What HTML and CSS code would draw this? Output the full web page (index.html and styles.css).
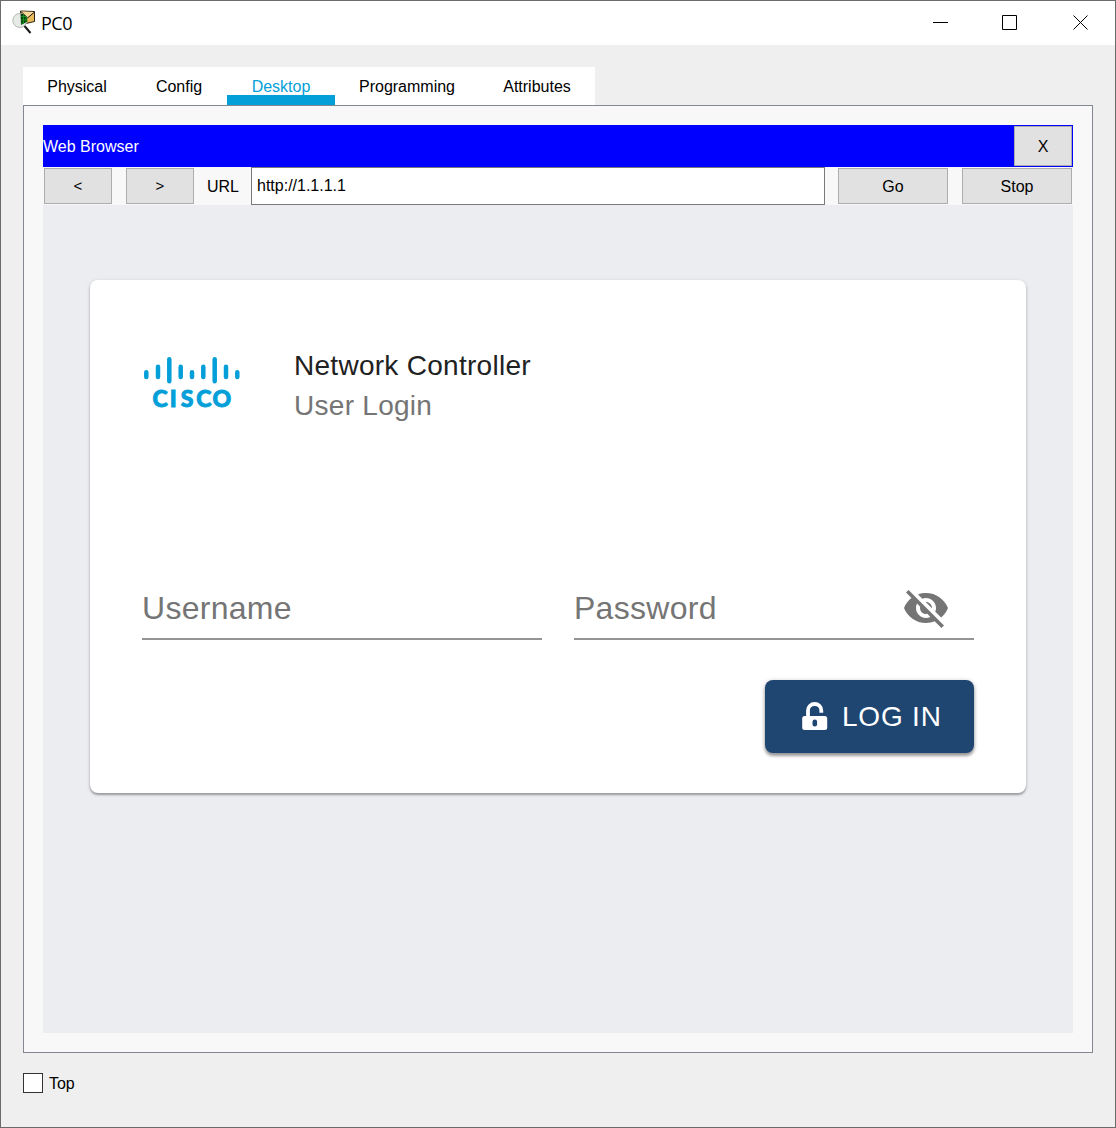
FILE: index.html
```html
<!DOCTYPE html>
<html lang="en">
<head>
<meta charset="utf-8">
<title>PC0</title>
<link rel="stylesheet" href="styles.css">
</head>
<body>
<div class="window">
  <header class="titlebar">
    <svg class="app-icon" width="24" height="25" viewBox="0 0 24 25">
      <path d="M8.500 1L22.500 1.500v10L9.500 14.500z" fill="#e9b95a" stroke="#2a2216" stroke-width="1"/>
      <path d="M9 1.500l6.500 6.500L22.500 2" fill="#f6d795" stroke="#15120c" stroke-width="1"/>
      <circle cx="7.800" cy="10.500" r="7" fill="#e6ebe6" stroke="#b5b5b5" stroke-width="1"/>
      <path d="M8.500 3.500q7 .5 7 8L9 15z" fill="#063d0a"/>
      <path d="M9 6.500h5M9 10h6M9 13h3M11.500 4.500v9M14 6v6" stroke="#18a324" stroke-width=".8"/>
      <path d="M12.500 16l6 7" stroke="#181818" stroke-width="2"/>
    </svg>
    <h1 class="window-title">PC0</h1>
    <div class="window-controls">
      <svg width="16" height="16" viewBox="0 0 16 16"><path d="M0 7.500h15"/></svg>
      <svg width="16" height="16" viewBox="0 0 16 16"><path d="M.5.500h14v14H.5z"/></svg>
      <svg width="16" height="16" viewBox="0 0 16 16"><path d="M.5.500l14 14m0-14l-14 14"/></svg>
    </div>
  </header>
  <main class="content">
    <nav class="tabs">
      <a class="tab tab-physical">Physical</a>
      <a class="tab tab-config">Config</a>
      <a class="tab tab-desktop active">Desktop</a>
      <a class="tab tab-programming">Programming</a>
      <a class="tab tab-attributes">Attributes</a>
    </nav>
    <section class="panel">
      <div class="app-bar"><span>Web Browser</span><button class="btn close">X</button></div>
      <div class="toolbar">
        <button class="btn nav">&lt;</button>
        <button class="btn nav">&gt;</button>
        <label class="url-label" for="url">URL</label>
        <input class="url" id="url" value="http://1.1.1.1">
        <button class="btn action">Go</button>
        <button class="btn action">Stop</button>
      </div>
      <div class="page">
        <form class="card">
          <div class="brand">
            <svg class="logo" width="100" height="62" viewBox="142 356 100 62">
              <path d="M146.300 372.200v4.800M158 366.800V377M169.300 359.200v22M180.700 366.800V377M192 372.200v4.800M203.300 366.800V377M214.700 359.200v22M226 366.800V377M237.300 372.200v4.800"/>
              <text x="152.500 169.700 180.800 196.300 212.600" y="406.600">CISCO</text>
            </svg>
            <div class="heading">
              <h2>Network Controller</h2>
              <p>User Login</p>
            </div>
          </div>
          <div class="fields">
            <div class="field"><span>Username</span></div>
            <div class="field">
              <span>Password</span>
              <svg class="eye" width="48" height="48" viewBox="0 0 24 24"><path d="M12 7c2.760 0 5 2.240 5 5 0 .65-.13 1.260-.36 1.830l2.920 2.920c1.510-1.260 2.700-2.890 3.430-4.750-1.730-4.390-6-7.500-11-7.500-1.400 0-2.740.25-3.980.7l2.160 2.160C10.740 7.130 11.350 7 12 7zM2 4.270l2.280 2.280.46.46C3.080 8.300 1.780 10.020 1 12c1.730 4.390 6 7.500 11 7.500 1.550 0 3.030-.3 4.380-.84l.42.42L19.730 22 21 20.730 3.270 3 2 4.270zM7.530 9.800l1.550 1.550c-.05.21-.08.43-.08.65 0 1.660 1.340 3 3 3 .22 0 .44-.03.65-.08l1.550 1.550c-.67.33-1.410.53-2.200.53-2.760 0-5-2.240-5-5 0-.79.2-1.530.53-2.200zm4.310-.78l3.150 3.150.02-.16c0-1.660-1.340-3-3-3l-.17.01z"/></svg>
            </div>
          </div>
          <button class="login" type="button">
            <svg width="26" height="29" viewBox="0 0 26 29">
              <path d="M6 15V8.500C6 4.700 9 2 12.700 2s6.600 2.700 6.600 6.500v2.200" fill="none" stroke="#fff" stroke-width="3.800"/>
              <rect x=".2" y="14" width="25" height="14" rx="2.500" fill="#fff"/>
              <rect x="10.500" y="17.500" width="4.600" height="7" rx="2.300" fill="#1f4571"/>
            </svg>
            <span>LOG IN</span>
          </button>
        </form>
      </div>
    </section>
    <label class="top-option"><input type="checkbox"><span>Top</span></label>
  </main>
</div>
</body>
</html>
```

FILE: styles.css
```css
* { box-sizing: border-box; }
body { margin: 0; font: 16px/20px "Liberation Sans", Arial, sans-serif; color: #000; }
h1, h2, p { margin: 0; font-weight: 400; }
button, input { font: inherit; color: inherit; margin: 0; }

.window { height: 1128px; border: 1px solid #6b6b6b; background: #efefef; display: flex; flex-direction: column; }
.titlebar { height: 44px; background: #fff; display: flex; align-items: center; padding: 0 26px 0 11px; }
.app-icon { margin: -2px 5px 0 0; }
.window-title { font: 18px/24px "Open Sans", sans-serif; letter-spacing: -0.5px; }
.window-controls { margin-left: auto; display: flex; }
.window-controls svg { fill: none; stroke: #000; margin-left: 55px; }
.window-controls svg:nth-child(2) { margin-left: 53px; }

.content { flex: 1; padding: 22px 22px 0; display: flex; flex-direction: column; align-items: flex-start; }
.tabs { display: flex; background: #fff; height: 38px; }
.tab { display: flex; justify-content: center; align-items: center; padding-top: 1px; }
.tab-physical { width: 108px; }
.tab-config { width: 96px; }
.tab-desktop { width: 108px; }
.tab-programming { width: 144px; }
.tab-attributes { width: 116px; }
.tab.active { color: #049fd9; background: linear-gradient(#049fd9, #049fd9) bottom / 100% 10px no-repeat; }

.panel { width: 1070px; height: 948px; border: 1px solid #828790; background: #f8f8f8; padding: 19px; display: flex; flex-direction: column; }
.app-bar { height: 42px; background: #00f; color: #fff; display: flex; align-items: center; justify-content: space-between; padding: 1px 1px 1px 0; }
.app-bar span { padding-top: 2px; }
.btn { background: #e1e1e1; border: 1px solid #adadad; color: #000; padding: 2px 0 0; }
.close { width: 58px; height: 40px; }
.toolbar { height: 38px; display: flex; align-items: center; padding: 0 1px; }
.nav { width: 68px; height: 36px; margin-right: 14px; padding-top: 0; font-size: 15px; }
.url-label { width: 44px; margin-left: -1px; padding-top: 2px; }
.url { width: 574px; height: 38px; border: 1px solid #7a7a7a; background: #fff; padding: 0 5px; border-radius: 0; margin-right: 13px; }
.action { width: 110px; height: 36px; }
.action + .action { margin-left: 14px; }
.page { flex: 1; background: #ebedf1; padding: 75px 47px 0; }

.card { width: 936px; height: 513px; background: #fff; border-radius: 8px; padding: 66px 52px 40px; display: flex; flex-direction: column; box-shadow: 0 2px 2px rgba(0,0,0,.28), 0 1px 4px rgba(0,0,0,.14); }
.brand { display: flex; gap: 52px; height: 80px; }
.logo { margin-top: 10px; }
.logo path { stroke: #049fd9; stroke-width: 4.500px; stroke-linecap: round; }
.logo text { font: 900 23px Lato, sans-serif; fill: #049fd9; stroke: #049fd9; stroke-width: .9px; }
.heading { font-size: 28px; line-height: 40px; letter-spacing: .28px; color: #212121; }
.heading h2 { font-size: inherit; }
.heading p { color: #757575; }
.fields { display: flex; gap: 32px; margin-top: 150px; }
.field { width: 400px; height: 64px; border-bottom: 2px solid #949494; display: flex; justify-content: space-between; align-items: center; padding-right: 24px; font-size: 32px; line-height: 38px; letter-spacing: .28px; color: #757575; }
.field span { padding-top: 2px; }
.eye { fill: #757575; margin-top: 2px; }
.login { align-self: flex-end; margin-top: 40px; width: 209px; height: 73px; border: 0; border-radius: 8px; background: #1f4571; color: #fff; padding: 0 0 0 37px; display: flex; align-items: center; gap: 14px; font-size: 28px; letter-spacing: .8px; box-shadow: 0 3px 3px rgba(0,0,0,.3), 0 1px 5px rgba(0,0,0,.25); }

.top-option { display: flex; align-items: flex-start; margin-top: 20px; gap: 6px; letter-spacing: -.1px; line-height: 22px; }
.top-option input { appearance: none; width: 20px; height: 20px; border: 1px solid #333; background: #fff; }
```
